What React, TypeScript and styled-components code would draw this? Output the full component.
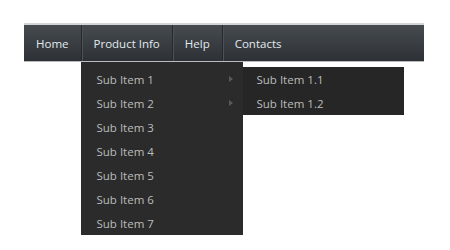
import React from 'react'
import styled, { createGlobalStyle } from 'styled-components'

const GlobalStyle = createGlobalStyle`
  html, body {
    margin: 0;
    background: #ffffff;
    font-family: 'Open Sans', 'Liberation Sans', sans-serif;
  }
`

const Page = styled.div`
  position: relative;
  height: 250px;
  padding: 23px 0 0 24px;
  box-sizing: border-box;
`

const Bar = styled.ul`
  position: relative;
  z-index: 1;
  display: flex;
  width: 400px;
  height: 36px;
  margin: 0;
  padding: 0;
  list-style: none;
  border-top: 2px solid #d2d4d6;
  background: linear-gradient(#464b50, #2d3135);
  box-shadow: 0 1px 0 #b9bbbd;
`

const TopItem = styled.li<{ $last?: boolean }>`
  position: relative;
  display: flex;
  align-items: center;
  padding: 0 12px 0 12px;
  color: #e2eaef;
  font-size: 11.5px;
  border-right: ${({ $last }) => ($last ? 'none' : '1px solid #272a2d')};
  box-shadow: ${({ $last }) => ($last ? 'none' : '1px 0 0 #4c5155')};
`

const Dropdown = styled.ul`
  position: absolute;
  z-index: 2;
  top: 37px;
  left: -1px;
  width: 162px;
  margin: 0;
  padding: 5px 0 0;
  list-style: none;
  background: #2b2b2b;
`

const SubItem = styled.li`
  position: relative;
  display: flex;
  align-items: center;
  height: 24px;
  padding-left: 16px;
  color: #bcbcbc;
  font-size: 11.5px;
`

const Arrow = styled.span`
  position: absolute;
  right: 10px;
  top: 9px;
  width: 0;
  height: 0;
  border-top: 3px solid transparent;
  border-bottom: 3px solid transparent;
  border-left: 4px solid #5a5a5a;
`

const Flyout = styled.ul`
  position: absolute;
  top: 0;
  left: 162px;
  width: 161px;
  margin: 0;
  padding: 0;
  list-style: none;
  background: #262626;
`

const FlyItem = styled(SubItem)`
  padding-left: 14px;
`

const subItems = ['Sub Item 1', 'Sub Item 2', 'Sub Item 3', 'Sub Item 4', 'Sub Item 5', 'Sub Item 6', 'Sub Item 7']

export default function App() {
  return (
    <>
      <GlobalStyle />
      <Page>
        <Bar>
          <TopItem>Home</TopItem>
          <TopItem>
            Product Info
            <Dropdown>
              {subItems.map((label, i) => (
                <SubItem key={label}>
                  {label}
                  {i < 2 && <Arrow />}
                  {i === 0 && (
                    <Flyout>
                      <FlyItem>Sub Item 1.1</FlyItem>
                      <FlyItem>Sub Item 1.2</FlyItem>
                    </Flyout>
                  )}
                </SubItem>
              ))}
            </Dropdown>
          </TopItem>
          <TopItem>Help</TopItem>
          <TopItem $last>Contacts</TopItem>
        </Bar>
      </Page>
    </>
  )
}
